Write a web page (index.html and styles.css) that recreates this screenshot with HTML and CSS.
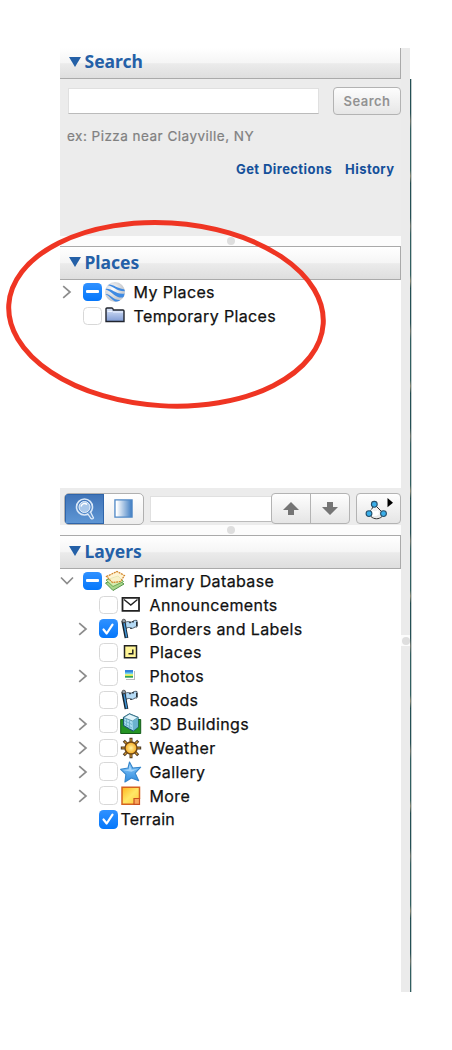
FILE: index.html
```html
<!DOCTYPE html>
<html lang="en">
<head>
<meta charset="utf-8">
<title>Places and Layers</title>
<link rel="stylesheet" href="styles.css">
</head>
<body>
<svg class="defs" width="0" height="0" aria-hidden="true">
  <defs>
    <linearGradient id="g-folder" x1="0" y1="0" x2="0" y2="1"><stop offset="0" stop-color="#dbe6fa"/><stop offset="1" stop-color="#7f9bd4"/></linearGradient>
    <linearGradient id="g-fade" x1="0" y1="0" x2="1" y2="0"><stop offset="0.1" stop-color="#fff"/><stop offset="1" stop-color="#3d7cc2"/></linearGradient>
    <linearGradient id="g-star" x1="0" y1="0" x2="0" y2="1"><stop offset="0" stop-color="#8ccbfa"/><stop offset="1" stop-color="#2f8ce0"/></linearGradient>
    <linearGradient id="g-note" x1="0" y1="0" x2="1" y2="1"><stop offset="0" stop-color="#ffb51e"/><stop offset="0.5" stop-color="#ffe766"/><stop offset="1" stop-color="#ffc53a"/></linearGradient>
    <radialGradient id="g-sun"><stop offset="0" stop-color="#fff3a0"/><stop offset="1" stop-color="#f7a81d"/></radialGradient>
    <radialGradient id="g-globe" cx=".4" cy=".35"><stop offset="0" stop-color="#fff"/><stop offset="1" stop-color="#c9ccd1"/></radialGradient>
    <clipPath id="c-globe"><circle cx="11" cy="11" r="10"/></clipPath>
    <symbol id="right" viewBox="0 0 10 16"><path d="M1.2 2.200 8 8l-6.800 5.800" fill="none" stroke="#8c8c8c" stroke-width="1.700"/></symbol>
    <symbol id="down" viewBox="0 0 14 10"><path d="M1 1.500 7 7.500l6-6" fill="none" stroke="#8c8c8c" stroke-width="1.700"/></symbol>
    <symbol id="flag" viewBox="0 0 22 22">
      <path d="M5.500 4.500c3-2.500 4 1 7-1 1-1 3-1.500 4.500-1v6.500c-3-1-3.500 2.500-6 1-2-1-3.500-.5-5 .5z" fill="#b5daf5" stroke="#4b5966" stroke-width="1"/>
      <path d="M10 3.800v1.500M13 3v1.500M16.800 4v4M11 10v1" stroke="#222b33" stroke-width="1.500"/>
      <path d="M3.200 3 6.500 20" stroke="#17212b" stroke-width="3.800"/><path d="M4 5l2.600 14.500" stroke="#3d92d4" stroke-width="1.500"/>
      <circle cx="3.800" cy="3" r="1.800" fill="#929da8" stroke="#333" stroke-width=".7"/>
    </symbol>
  </defs>
</svg>

<main class="window">
  <div class="sidebar">
    <section>
      <h2 class="head head-first"><i class="tri"></i>Search</h2>
      <div class="search">
        <div class="search-row"><div class="field"></div><button class="search-btn">Search</button></div>
        <p class="hint">ex: Pizza near Clayville, NY</p>
        <div class="links"><a class="link">Get Directions</a><a class="link">History</a></div>
      </div>
    </section>
    <div class="split"><i class="dot"></i></div>

    <section class="places">
      <h2 class="head"><i class="tri"></i>Places</h2>
      <div class="tree">
        <div class="row">
          <span class="twisty"><svg width="10" height="16"><use href="#right"/></svg></span>
          <span class="check mixed"></span>
          <svg class="icon" viewBox="0 0 22 22"><circle cx="11" cy="11" r="10" fill="url(#g-globe)"/><g clip-path="url(#c-globe)" fill="#3f8ae2"><path d="M3 4c5-2.500 9 3.500 18.500 4.500v1.800C12 10.500 9 4.500 3 4z"/><path d="M.5 8c8-1.500 10 6 20.500 4.500l-1.500 4C11 17.500 9 10.500.5 8z"/><path d="M1 13c5-1 8 6.500 15.500 6l-2.500 2C8.500 21 6.500 15 1 13z"/></g></svg>
          <span class="label">My Places</span>
        </div>
        <div class="row">
          <span class="twisty"></span><span class="check"></span>
          <svg class="icon" viewBox="0 0 22 22"><path d="M2 5V4q0-1 1-1h5q1 0 1.300 2H19q1 0 1 1v10.500H2z" fill="url(#g-folder)" stroke="#20242e" stroke-width="1.400"/><path d="M3.500 6.300h5M9 7h10" stroke="#eef4ff" stroke-width="1.200"/></svg>
          <span class="label">Temporary Places</span>
        </div>
      </div>
    </section>

    <div class="tools">
      <div class="seg">
        <span class="seg-on"><svg width="24" height="26" viewBox="0 0 24 26"><circle cx="11.500" cy="11" r="8" fill="none" stroke="#d9e7f7" stroke-width="1.600"/><circle cx="11.500" cy="11" r="5.500" fill="#a8c7ea" stroke="#e6f0fb"/><path d="M8 10.500c1-3 4-4 6-2" stroke="#fff" stroke-width="1.500" fill="none"/><path d="m14.500 17.500 3.500 5q1.500 1 2.500-.5l-3-6" fill="#5f91ca" stroke="#e0ecfa" stroke-width="1.300"/></svg></span>
        <span class="seg-off"><svg width="19" height="19" viewBox="0 0 20 20"><path d="M1 1h18v18H1z" fill="url(#g-fade)" stroke="#4f88c6" stroke-width="1.400"/></svg></span>
      </div>
      <div class="field field-small"></div>
      <div class="pair">
        <span class="half"><svg width="16" height="13" viewBox="0 0 16 13"><path d="m8 0 8 8h-5v5H5V8H0z" fill="#757575"/></svg></span>
        <span class="half"><svg width="16" height="13" viewBox="0 0 16 13"><path d="m8 13 8-8h-5V0H5v5H0z" fill="#757575"/></svg></span>
      </div>
      <div class="tour"><svg width="43" height="29" viewBox="0 0 43 29"><path d="m17.500 10.500 9 9M17.500 10.500l-5.500 9M14 22.500c3 3 8 3 11 0" fill="none" stroke="#333" stroke-width="1"/><path d="M14 15q3 4 7 1l1 4q-4 4-8 1z" fill="#fff"/><g fill="#39aee9" stroke="#27506b" stroke-width="1.100"><circle cx="17.300" cy="10.300" r="2.900"/><circle cx="12" cy="19.600" r="2.900"/><circle cx="26.500" cy="19.600" r="2.900"/></g><path d="m30.500 4 5.500 4.700-5.500 4.600z"/></svg></div>
    </div>
    <div class="split"><i class="dot"></i></div>

    <section class="layers">
      <h2 class="head"><i class="tri"></i>Layers</h2>
      <div class="tree">
        <div class="row">
          <span class="twisty twisty-open"><svg width="14" height="10"><use href="#down"/></svg></span>
          <span class="check mixed"></span>
          <svg class="icon" viewBox="0 0 22 22"><path d="m1.500 13 11-5 7.500 6-11 6.500z" fill="#a8d58b" stroke="#56964b"/><path d="m2 10 12-4 5.500 5.500-10.500 5z" fill="#d8ecb2" stroke="#6da953"/><path d="m2.500 6.500 10.500-5 7.500 4-4 6-8 1z" fill="#fff2cb" fill-opacity=".85" stroke="#d08429" stroke-width="1.200" stroke-dasharray="2 .7"/></svg>
          <span class="label">Primary Database</span>
        </div>
        <div class="row sub">
          <span class="twisty"></span><span class="check"></span>
          <svg class="icon" viewBox="0 0 22 22"><path d="M2.500 3.800h16.500v13H2.500z" fill="#fff" stroke="#222" stroke-width="1.800"/><path d="m4 5.500 6.800 5.500 6.700-5.500" fill="none" stroke="#222" stroke-width="1.400"/></svg>
          <span class="label">Announcements</span>
        </div>
        <div class="row sub">
          <span class="twisty"><svg width="10" height="16"><use href="#right"/></svg></span><span class="check on"><svg width="18" height="18" viewBox="0 0 18 18"><path d="m4.500 9.500 3.200 4L13.500 4.700" fill="none" stroke="#fff" stroke-width="2.200" stroke-linecap="round" stroke-linejoin="round"/></svg></span>
          <svg class="icon"><use href="#flag"/></svg>
          <span class="label">Borders and Labels</span>
        </div>
        <div class="row sub">
          <span class="twisty"></span><span class="check"></span>
          <svg class="icon" viewBox="0 0 22 22"><path d="M4.500 4.700h12v12h-12z" fill="#fff596" stroke="#222" stroke-width="1.500"/><path d="M12.800 8.500v4.200H8.500" fill="none" stroke="#222" stroke-width="1.500"/></svg>
          <span class="label">Places</span>
        </div>
        <div class="row sub">
          <span class="twisty"><svg width="10" height="16"><use href="#right"/></svg></span><span class="check"></span>
          <svg class="icon" viewBox="0 0 22 22"><path d="M6 6h9v9H6z" fill="#bbb"/><path d="M5 5h9v9H5z" fill="#fff"/><path d="M5 5h8v3H5z" fill="#3484dc"/><path d="M5 7.500h8v1.800H5z" fill="#71d4eb"/><path d="M5 9.300h8v1.700H5z" fill="#ddeb55"/><path d="M5 11h8v1.700H5z" fill="#32a45b"/></svg>
          <span class="label">Photos</span>
        </div>
        <div class="row sub">
          <span class="twisty"></span><span class="check"></span>
          <svg class="icon"><use href="#flag"/></svg>
          <span class="label">Roads</span>
        </div>
        <div class="row sub">
          <span class="twisty"><svg width="10" height="16"><use href="#right"/></svg></span><span class="check"></span>
          <svg class="icon" viewBox="0 0 22 22"><path d="M.7 6.500h20v14H.7z" fill="#249323" stroke="#135d19"/><path d="m3.500 4.500 6-3.500 8.500 3.500V14L13 18 3.500 12.500z" fill="#a9dcef" stroke="#1b5870" stroke-width="1.200"/><path d="m3.500 4.500 6-3.500L18 4.500 12.500 8z" fill="#e1f5fc" stroke="#35758e" stroke-width=".7"/><path d="M12.500 8 18 4.500V14l-5 4z" fill="#6bb2cd"/><path d="m4 7.500 8 4m-8-1 8 4.500M6.500 6v8m3-6.500v8.300" stroke="#65acc5" stroke-width=".8"/></svg>
          <span class="label">3D Buildings</span>
        </div>
        <div class="row sub">
          <span class="twisty"><svg width="10" height="16"><use href="#right"/></svg></span><span class="check"></span>
          <svg class="icon" viewBox="0 0 22 22"><path d="M11 .8v20.400M.8 11h20.400M3.800 3.800l14.400 14.400m0-14.400L3.800 18.200" stroke="#4b3822" stroke-width="3"/><path d="M11 1.800v18.400M1.800 11h18.400M4.500 4.500l13 13m0-13-13 13" stroke="#d79a31" stroke-width="1.200"/><circle cx="11" cy="11" r="6" fill="url(#g-sun)" stroke="#714916" stroke-width="1.400"/></svg>
          <span class="label">Weather</span>
        </div>
        <div class="row sub">
          <span class="twisty"><svg width="10" height="16"><use href="#right"/></svg></span><span class="check"></span>
          <svg class="icon" viewBox="0 0 22 22"><path d="m9.500 1 3.200 6 8-.8-5.500 6 3.500 7.600-7.300-2.800-6.500 4 1-7.600L.6 8.300 8 7z" fill="url(#g-star)" stroke="#3586cb" stroke-width="1.100" stroke-linejoin="round"/><path d="m9.400 4 2.300 4.700 5.800-.6-6 2.700-8-1.600 5.500-.9z" fill="#bbe2ff" fill-opacity=".7"/></svg>
          <span class="label">Gallery</span>
        </div>
        <div class="row sub">
          <span class="twisty"><svg width="10" height="16"><use href="#right"/></svg></span><span class="check"></span>
          <svg class="icon" viewBox="0 0 22 22"><path d="M2 2.300h17.500v11.200L14 19.300H2z" fill="url(#g-note)" stroke="#d56320" stroke-width="1.500"/><path d="M19.500 13.500H14v5.800h5.500z" fill="#f9a65c" stroke="#c95020" stroke-width="1.200"/></svg>
          <span class="label">More</span>
        </div>
        <div class="row sub">
          <span class="twisty"></span><span class="check on"><svg width="18" height="18" viewBox="0 0 18 18"><path d="m4.500 9.500 3.200 4L13.500 4.700" fill="none" stroke="#fff" stroke-width="2.200" stroke-linecap="round" stroke-linejoin="round"/></svg></span>
          <span class="label label-bare">Terrain</span>
        </div>
      </div>
    </section>
  </div>
  <div class="gutter"><div class="grip"><i class="dot"></i></div></div>
  <div class="map-edge"></div>
</main>
<svg class="annotation" width="330" height="200" viewBox="0 215 330 200"><ellipse cx="166" cy="314.300" rx="157.500" ry="91.500" transform="rotate(3.500 166 314.300)" fill="none" stroke="#ef3523" stroke-width="5"/></svg>
</body>
</html>
```
FILE: styles.css
```css
* { box-sizing: border-box; }
body { margin: 0; background: #fff; font-family: Inter, "Liberation Sans", sans-serif; color: #111; }
.defs { display: block; height: 0; }
.window { display: flex; height: 992px; padding: 48px 0 0 60px; }
.sidebar { width: 341px; display: flex; flex-direction: column; }

.head {
  display: flex; align-items: center; gap: 4px; height: 34px; margin: 0; padding: 0 0 3px 8.5px;
  border: solid #aaa; border-width: 1px 1px 1px 0;
  background: linear-gradient(#fff, #f5f5f5 50%, #ebebeb 52%, #dedede);
  font: bold 17.5px "Noto Sans", "Open Sans", sans-serif; color: #2460a7;
}
.head-first { height: 31px; border-top: 0; padding-bottom: 4px; }
.tri { margin-top: 1px; border: solid transparent; border-width: 10.5px 6.5px 0; border-top-color: #2460a7; }

.search { height: 157px; padding: 8px 0 0 8px; background: #ececec; }
.search-row { display: flex; justify-content: space-between; align-items: center; }
.field { width: 251px; height: 26px; background: #fff; border: 1px solid #e0e0e0; border-bottom-color: #bbb; }
.search-btn {
  width: 68px; height: 28px; padding: 0; border: 1.5px solid #b3b3b3; border-radius: 4px;
  background: linear-gradient(#fdfdfd, #e6e6e6); font: 600 13px Inter, sans-serif; letter-spacing: .5px; color: #929292;
}
.hint { margin: 12.5px 0 0 -1px; font-size: 13.5px; letter-spacing: .48px; line-height: 17px; color: #808080; white-space: nowrap; -webkit-text-stroke: .2px; }
.links { display: flex; justify-content: flex-end; gap: 13px; margin-top: 16px; padding-right: 6.5px; }
.link { font-size: 13px; font-weight: 700; letter-spacing: .42px; line-height: 17px; color: #15509a; white-space: nowrap; }

.split { display: flex; justify-content: center; align-items: center; height: 10px; background: #fcfcfc; }
.dot { width: 8px; height: 8px; border-radius: 50%; background: #dedede; }

.places { height: 242px; }
.row { display: flex; align-items: center; height: 23.85px; }
.sub { padding-left: 16px; }
.twisty { display: flex; flex: none; width: 23px; padding-left: 2px; }
.twisty svg { flex: none; }
.twisty-open { padding-left: 0; }
.check { flex: none; width: 18.5px; height: 18.5px; border: 1px solid #d8d8d8; border-radius: 4.5px; background: #fff; }
.mixed, .on { display: flex; justify-content: center; align-items: center; border: 0; background: linear-gradient(#3091ff, #0477fb); }
.mixed::before { content: ""; width: 13px; height: 3px; border-radius: 1px; background: #fff; }
.icon { flex: none; width: 22px; height: 22px; margin-left: 2px; }
.label { margin-left: 8px; font-size: 16px; letter-spacing: .38px; line-height: 22px; white-space: nowrap; color: #111; -webkit-text-stroke: .25px; }
.label-bare { margin-left: 3px; letter-spacing: .2px; }

.tools { display: flex; align-items: center; height: 37px; padding: 4px 0 0 4px; background: #ececec; }
.seg { display: flex; width: 80px; height: 32px; border: 1px solid #b0b0b0; border-radius: 5px; background: linear-gradient(#fff, #ededed); overflow: hidden; }
.seg-on, .seg-off, .half { display: flex; flex: 1; align-items: center; justify-content: center; }
.seg-on { background: linear-gradient(#3f73b7, #5f97d5); box-shadow: inset 0 0 0 1px #2f65aa; }
.field-small { width: 122px; margin-left: 6px; }
.pair { display: flex; width: 79px; height: 31px; margin-left: -1px; border: 1.5px solid #b3b3b3; border-radius: 4px; background: linear-gradient(#fefefe, #e5e5e5); }
.half + .half { border-left: 1px solid #b3b3b3; }
.tour { width: 45px; height: 31px; margin-left: auto; border: 1px solid #b3b3b3; border-radius: 4px; background: linear-gradient(#fefefe, #e5e5e5); }
.tour svg { display: block; }

.gutter { width: 9px; height: 944px; padding-top: 587px; background: #ebebeb; }
.grip { display: flex; align-items: center; justify-content: center; height: 11px; background: #fcfcfc; }
.map-edge { width: 2px; height: 913px; margin-top: 31px; border-right: 1px solid #c3cbcb; background: repeating-linear-gradient(#244f55 0 34px, #73746a 42px, #315f61 50px 91px, #8a8570 97px, #17464c 105px); }
.annotation { position: absolute; left: 0; top: 215px; }
```
